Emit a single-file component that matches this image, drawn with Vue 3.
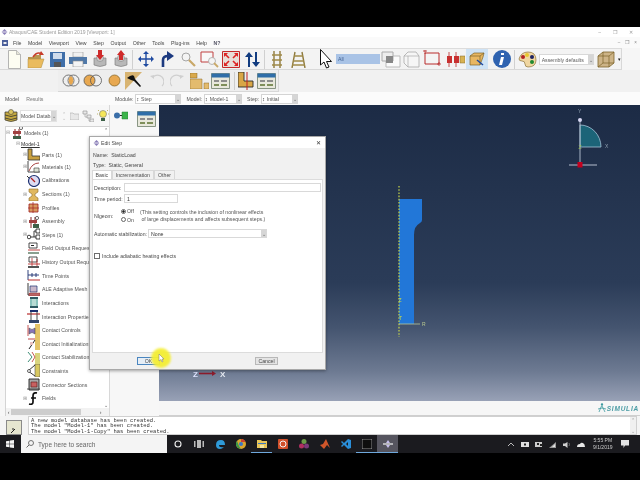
<template>
  <div class="screen">
    <div class="title-bar">
      <Ico class="app-ico" :s="icons.abq" :w="7" :ht="7" />
      <span>Abaqus/CAE Student Edition 2019 [Viewport: 1]</span>
      <div class="win-btns"><i>&#8211;</i><i>&#10064;</i><i>&#10005;</i></div>
    </div>
    <div class="menu-bar">
      <Ico class="sys" :s="icons.sysbox" :w="6" :ht="6" />
      <span v-for="m in menus" :key="m">{{ m }}</span>
      <span class="whats">N?</span>
      <div class="mdi-btns"><i>&#8211;</i><i>&#10064;</i><i>&#215;</i></div>
    </div>
    <div class="tool-row">
      <div class="tool-bar first">
        <template v-for="(t, n) in toolsOne" :key="n">
          <Ico :s="t.s" :w="t.w" :ht="t.h" :style="{ marginLeft: t.x + 'px' }" />
        </template>
        <div class="all-box">All</div>
        <template v-for="(t, n) in toolsTwo" :key="n">
          <span class="hl" v-if="t.hl" :style="{ marginLeft: t.x + 'px' }"><Ico :s="t.s" :w="t.w" :ht="t.h" /></span>
          <Ico v-else :s="t.s" :w="t.w" :ht="t.h" :style="{ marginLeft: t.x + 'px' }" />
        </template>
        <div class="defaults-box"><span>Assembly defaults</span><b>&#8964;</b></div>
        <Ico :s="icons.wire" :w="18" :ht="17" />
        <span class="more">&#9662;</span>
      </div>
    </div>
    <div class="tool-row second">
      <div class="tool-bar small">
        <template v-for="(t, n) in toolsRow2" :key="n">
          <span class="active-tool" v-if="t.hl" :style="{ marginLeft: t.x + 'px' }"><Ico :s="t.s" :w="t.w" :ht="t.h" /></span>
          <Ico v-else :s="t.s" :w="t.w" :ht="t.h" :style="{ marginLeft: t.x + 'px' }" />
        </template>
      </div>
    </div>
    <div class="context-row">
      <div class="tabs-left"><span>Model</span><span class="off">Results</span></div>
      <div class="ctx"><label>Module:</label><div class="combo mod"><em>&#8597;</em>Step<b>&#8964;</b></div></div>
      <div class="ctx"><label>Model:</label><div class="combo mdl"><em>&#8597;</em>Model-1<b>&#8964;</b></div></div>
      <div class="ctx"><label>Step:</label><div class="combo stp"><em>&#8597;</em>Initial<b>&#8964;</b></div></div>
    </div>

    <div class="main">
      <aside class="left">
        <div class="tree-head">
          <Ico :s="icons.dbs" :w="14" :ht="13" />
          <div class="db-combo"><span>Model Database</span><b>&#8964;</b></div>
          <span class="updown">&#8963;<br />&#8964;</span>
          <Ico :s="icons.folderGrey" :w="9" :ht="8" />
          <Ico :s="icons.treeGrey" :w="12" :ht="12" />
          <Ico :s="icons.bulb" :w="12" :ht="14" />
        </div>
        <div class="tree">
          <div class="tree-rows">
            <div v-for="row in tree" :key="row.label" class="tree-row" :class="'lvl' + row.lvl">
              <span class="exp"><template v-if="row.exp">{{ row.exp }}</template></span>
              <Ico v-if="row.s" :s="row.s" :w="13" :ht="13" />
              <span class="lbl" :class="{ cur: row.cur }">{{ row.label }}</span>
            </div>
          </div>
          <div class="vscroll"><span>&#8963;</span><span>&#8964;</span></div>
          <div class="hscroll"><span>&lsaquo;</span><div class="thumb"></div><span>&rsaquo;</span></div>
        </div>
      </aside>
      <div class="toolbox">
        <Ico :s="icons.nodes" :w="14" :ht="9" />
        <Ico :s="icons.dlg" :w="19" :ht="16" />
      </div>
      <div class="right">
        <svg class="viewport" viewBox="159 105 481 296" width="481" height="296">
          <defs>
            <linearGradient id="bg" x1="0" y1="0" x2="0" y2="1">
              <stop offset="0" stop-color="#1c2b45" />
              <stop offset=".6" stop-color="#2b3c58" />
              <stop offset=".75" stop-color="#44546f" />
              <stop offset=".9" stop-color="#6d7a92" />
              <stop offset="1" stop-color="#98a1b6" />
            </linearGradient>
          </defs>
          <rect x="159" y="105" width="481" height="296" fill="url(#bg)" />
          <path d="M399 199h23v21q0 2-2 3-6 3-6 12v89h-15z" fill="#2277d8" />
          <path d="M399 186V337" stroke="#c8d84a" stroke-dasharray="1.6 1.6" stroke-width="1.2" />
          <path d="M399 324h21" stroke="#b6c79a" stroke-width=".8" />
          <text x="422" y="325.5" class="vp-text" fill="#b9c88f">R</text>
          <text x="398.500" y="302" class="vp-text" fill="#c8d84a">Z</text>
          <text x="399" y="319.500" class="vp-text" fill="#c8d84a">T</text>
          <path d="M580 125a21 22 0 0 1 21 22h-21z" fill="#1c6478" stroke="#a6c4d8" stroke-width=".8" />
          <path d="M580 120V165" stroke="#b8c4d4" stroke-width=".9" />
          <path d="M569 165h28" stroke="#8c97a9" stroke-width="1.4" />
          <circle cx="580" cy="120" r="2" fill="#d8d8f4" />
          <rect x="577.5" y="162" width="5" height="5.5" fill="#c4001e" />
          <text x="578" y="113" class="vp-text" fill="#8fa0b0">Y</text>
          <text x="605" y="148" class="vp-text" fill="#8fa0b0">X</text>
          <text x="578.5" y="149" class="vp-text" fill="#9cc05a">Z</text>
          <path d="M199 373.500h15" stroke="#8e1c2c" stroke-width="1.6" />
          <path d="M212 371l4 2.500-4 2.500z" fill="#8e1c2c" />
          <text x="193" y="376.500" class="triad" fill="#dfe4ff">Z</text>
          <text x="220" y="376.500" class="triad" fill="#e8ecf4">X</text>
        </svg>
        <div class="status-band">
          <Ico :s="icons.simulia" :w="9" :ht="10" />
          <span class="simulia">SIMULIA</span>
        </div>
      </div>
    </div>

    <div class="message-row">
      <div class="msg-btn"><Ico :s="icons.msgArrow" :w="8" :ht="8" /></div>
      <div class="msg-box">
        <pre>A new model database has been created.
The model "Model-1" has been created.
The model "Model-1-Copy" has been created.</pre>
        <div class="msg-scroll"><span>&#8963;</span><span>&#8964;</span></div>
      </div>
    </div>

    <div class="taskbar">
      <Ico class="start" :s="icons.win" :w="8" :ht="8" />
      <div class="search">
        <Ico :s="icons.searchGlass" :w="8" :ht="8" />
        <span>Type here to search</span>
      </div>
      <div class="task-icons">
        <span v-for="(t, n) in taskIcons" :key="n" class="task-ico" :class="{ open: t.open, on: t.on }">
          <Ico :s="t.s" :w="10" :ht="10" />
        </span>
      </div>
      <div class="tray">
        <Ico v-for="(t, n) in trayIcons" :key="n" :s="t" :w="8" :ht="7" />
        <div class="clock"><span>5:55 PM</span><span>9/1/2019</span></div>
        <Ico class="notify" :s="icons.notify" :w="8" :ht="8" />
      </div>
    </div>

    <section class="dialog">
      <header class="dlg-title">
        <Ico :s="icons.abq" :w="6" :ht="6" />
        <span>Edit Step</span>
        <i>&#10005;</i>
      </header>
      <div class="dlg-body">
        <p class="info">Name:&nbsp; StaticLoad</p>
        <p class="info">Type:&nbsp; Static, General</p>
        <div class="dlg-tabs">
          <span class="tab on">Basic</span>
          <span class="tab">Incrementation</span>
          <span class="tab">Other</span>
        </div>
        <div class="panel">
          <div class="field-row"><label class="lab-a">Description:</label><div class="input wide"></div></div>
          <div class="field-row"><label class="lab-a">Time period:</label><div class="input short">1</div></div>
          <div class="nl-row">
            <label class="nl-label">Nlgeom:</label>
            <div class="radios">
              <span class="radio"><i class="dot on"></i>Off</span>
              <span class="radio"><i class="dot"></i>On</span>
            </div>
            <div class="nl-note">
              (This setting controls the inclusion of nonlinear effects<br />
              &nbsp;of large displacements and affects subsequent steps.)
            </div>
          </div>
          <div class="field-row stab">
            <label>Automatic stabilization:</label>
            <div class="input select">None<b>&#8964;</b></div>
          </div>
          <div class="check-row"><i class="box"></i>Include adiabatic heating effects</div>
        </div>
        <div class="dlg-foot">
          <button class="btn ok">OK</button>
          <button class="btn cancel">Cancel</button>
        </div>
      </div>
    </section>
    <div class="cursor-glow"></div>
    <svg class="pointer" width="7" height="9" viewBox="0 0 7 9"><path d="M1 0v7l2-1.500 1 2.500 1-.5-1-2.500h2z" fill="#fff" stroke="#777" stroke-width=".5" /></svg>
  </div>
</template>

<script setup>
import { h } from 'vue'

const Ico = ({ s, w, ht }) =>
  h('svg', { width: w, height: ht, viewBox: `0 0 ${w} ${ht}` },
    s.map(([d, fill = 'none', stroke = 'none', sw = 1]) =>
      h('path', { d, fill, stroke, 'stroke-width': sw })))

const c = (x, y, r) => `M${x - r} ${y}a${r} ${r} 0 1 0 ${2 * r} 0a${r} ${r} 0 1 0 ${-2 * r} 0z`

const menus = ['File', 'Model', 'Viewport', 'View', 'Step', 'Output', 'Other', 'Tools', 'Plug-ins', 'Help']

const cyl = (top, body) => [
  ['M1 8v7q6 3 12 0V8z', body, '#777', 0.6],
  [c(7, 8, 3.5), top, '#777', 0.5]
]
const dlg = [
  ['M.5 .5h18v15H.5z', '#e8e8dc', '#6f7f6a', 0.8],
  ['M.5 .5h18v4H.5z', '#2f6ea8'],
  ['M3 7h5v2H3zM10 7h6v2h-6z', '#8d8d8d'],
  ['M3 11h5v2H3zM10 11h6v2h-6z', '#7f8f5a']
]
const rail = [
  ['M3 0V17M9 0V17', 'none', '#8f7a3c', 1.4],
  ['M1 4h10M1 9h10M1 14h10', 'none', '#a08a48', 1.4]
]
const railB = [
  ['M4 1L1 17M11 1L14 17', 'none', '#8f7a3c', 1.4],
  ['M3 5h9M2 10h11M1 14h13', 'none', '#a08a48', 1.4]
]
const mag = [
  [c(5, 5, 4), '#f4f4f4', '#a6a6a6', 1],
  ['M8 8l6 6', 'none', '#c9a868', 2.2]
]

const icons = {
  abq: [['M3.500 0l3 3-3 3-3-3z', '#8a7fb8'], ['M0 3h7', 'none', '#fff', 0.8]],
  sysbox: [['M0 0h6v6H0z', '#4b5f9a'], ['M1.500 2h3v2h-3z', '#eee']],
  wire: [
    ['M1 5l5-4h11v11l-5 4H1z', '#cdb487', '#7b6328', 0.8],
    ['M1 5h11v11M12 5l5-4M6 1v11H17M6 12l-5 4', 'none', '#7b6328', 0.7]
  ],
  dbs: [
    ['M1 3v8q6 3 12 0V3z', '#c4a840', '#333', 0.7],
    [c(7, 3, 2.5), '#dcc662', '#333', 0.5],
    ['M1 6q6 3 12 0M1 9q6 3 12 0', 'none', '#333', 0.8]
  ],
  folderGrey: [['M0 1h3l1 1h5v6H0z', '#e8e8e8', '#b4b4b4', 0.7]],
  treeGrey: [['M1 1h4v3H1zM5 5h4v3H5zM8 9h4v3H8z', '#e8e8e8', '#999', 0.7], ['M3 4v3h2M7 8v3h1', 'none', '#999', 0.6]],
  bulb: [
    [c(6, 5, 3.5), '#f4e65a', '#777', 0.6],
    ['M4 9h4v3H4z', '#3d6148'],
    ['M1 1l1 1M11 1l-1 1M0 5h1M12 5h-1', 'none', '#a89a32', 0.7]
  ],
  nodes: [
    [c(3, 4.5, 3), '#3a6ea8'],
    ['M6 4.500h3', 'none', '#222', 1],
    ['M8 1h6v7H8z', '#3cb44a', '#2a7d36', 0.5]
  ],
  dlg,
  simulia: [
    [c(5, 1.5, 1.2), '#3c9aa0'],
    ['M4.500 3L2 9M5 3l3 6M1 6q4-2 8 0', 'none', '#3c9aa0', 0.8]
  ],
  msgArrow: [['M1 7l4-4M2 3l2 0', 'none', '#222', 1]],
  win: [['M0 1.200l3.500-.5v3H0zM4 .6L8 0v3.700H4zM0 4.300h3.500v3L0 6.800zM4 4.300h4V8l-4-.6z', '#f4f4f4']],
  searchGlass: [[c(5, 3, 2.500), 'none', '#555', 0.8], ['M3 5L.5 7.500', 'none', '#555', 0.9]],
  notify: [['M0 0h8v5.500H4L2.500 8V5.500H0z', '#e4e4e4']]
}

const toolsOne = [
  { x: 8, w: 13, h: 19, s: [['M.5 .5h8l4 4v14H.5z', '#fdfdf2', '#a2a2a2', 0.8], ['M8.500 .5v4h4', '#e6e6d8', '#a2a2a2', 0.6]] },
  { x: 6, w: 18, h: 17, s: [['M1 6h5l2-2h6v4H1z', '#b8964e'], ['M1 8h16l-3 9H1z', '#eabb5e', '#a98a44', 0.5], ['M6 6q4-6 9-3', 'none', '#c83c2a', 1.6], ['M14 0l3 4-5 0z', '#c83c2a']] },
  { x: 5, w: 15, h: 15, s: [['M0 0h15v15H0z', '#3f6ea8'], ['M3 1h9v6H3z', '#cfdcec'], ['M4 10h7v5H4z', '#555']] },
  { x: 4, w: 18, h: 15, s: [['M4 0h10v5H4z', '#f0f0f0', '#999', 0.6], ['M0 5h18v7H0z', '#4f78a8'], ['M4 9h10v6H4z', '#f4f4f4', '#8c8c8c', 0.6]] },
  { x: 6, w: 14, h: 19, s: [...cyl('#cfcfcf', '#b8b8b8'), ['M5 0h4v5h2L7 10 3 5h2z', '#cf2a2a']] },
  { x: 7, w: 14, h: 19, s: [...cyl('#cfcfcf', '#b8b8b8'), ['M5 10h4V5h2L7 0 3 5h2z', '#cf2a2a']] },
  { x: 4, w: 1, h: 19, s: [['M.5 0v19', 'none', '#d0d0d0', 1]] },
  { x: 5, w: 16, h: 16, s: [['M8 1v14M1 8h14', 'none', '#1f4aa0', 1.4], ['M8 0l3 3H5zM8 16l3-3H5zM0 8l3-3v6zM16 8l-3-3v6z', '#1f4aa0']] },
  { x: 6, w: 14, h: 16, s: [['M3 16V9q0-4 5-4', 'none', '#1c3a80', 2.6], ['M7 0l7 5-7 5z', '#1c3a80']] },
  { x: 7, w: 15, h: 15, s: mag },
  { x: 4, w: 19, h: 17, s: [['M1 1h12v10H1z', '#f8f8f8', '#c04040', 1], [c(12, 10, 3.5), '#f4f4f4', '#a6a6a6', 0.8], ['M14 12l4 4', 'none', '#c9a868', 1.8]] },
  { x: 3, w: 18, h: 17, s: [['M.5 .5h17v16H.5z', '#e8ded8', '#c42a2a', 1], ['M3 3l4 4M15 3l-4 4M3 14l4-4M15 14l-4-4', 'none', '#d22', 1.6], ['M2 2h4L2 6zM16 2h-4l4 4zM2 15h4l-4-4zM16 15h-4l4-4z', '#d22']] },
  { x: 5, w: 15, h: 15, s: [['M4 3v12M11 0v12', 'none', '#123c80', 2], ['M0 5l4-5 4 5zM7 10l4 5 4-5z', '#123c80']] },
  { x: 4, w: 1, h: 19, s: [['M.5 0v19', 'none', '#d0d0d0', 1]] },
  { x: 6, w: 12, h: 17, s: rail },
  { x: 8, w: 15, h: 17, s: railB },
  { x: 14, w: 13, h: 20, s: [['M.5 .5V16l3.500-3 2.500 6 2.500-1-2.500-5.500h5z', '#fff', '#111', 1]] }
]

const toolsTwo = [
  { x: 1, w: 20, h: 17, s: [['M5 5h14v11H5z', '#fbfbfb', '#bbb', 1], ['M1 1h11v9H1z', '#ededed', '#aaa', 1], ['M5 5h7v7H5z', '#888']] },
  { x: 2, w: 17, h: 17, s: [['M1 5l4-4h8l3 4v11H5l-4-4z', '#f6f6f6', '#aaa', 0.8], ['M5 5h11M5 5v11M5 5l-4 0', 'none', '#aaa', 0.7]] },
  { x: 3, w: 19, h: 18, s: [['M2 3h14v11H2z', '#f4f4f4', '#b92c2c', 1], ['M0 1h4M2 0v4M14 14h4M16 12v4', 'none', '#b92c2c', 0.8]] },
  { x: 4, w: 19, h: 18, s: [['M3 2v15M10 2v15', 'none', '#b92c2c', 0.8], ['M1 6h5v7H1zM8 6h5v7H8z', '#c83030'], ['M14 6h5v7h-5z', '#d8b252', '#80692c', 0.5]] },
  { hl: true, x: 1, w: 16, h: 14, s: [['M1 4l4-3h10l-1 4-3 8H1z', '#e8b762', '#7b6328', 0.7], ['M1 4h10v9M11 4l4-3', 'none', '#7b6328', 0.7], ['M8 8l6 5', 'none', '#1f4aa0', 1.5]] },
  { x: 5, w: 18, h: 18, s: [[c(9, 9, 9), '#2f63b0'], ['M8 3h3v2H8zM8 7h3l-2 8H6z', '#fff']] },
  { x: 3, w: 1, h: 19, s: [['M.5 0v19', 'none', '#d0d0d0', 1]] },
  { x: 3, w: 19, h: 17, s: [['M1 8q2-7 9-7 8 0 8 8 0 7-8 7-3 0-3-3 0-3-3-3-3 0-3-2z', '#f0d6a0', '#8c7238', 0.7], [c(5, 6, 2), '#b02020'], [c(9, 4, 2), '#e8c830'], [c(14, 6, 2), '#1c2060'], [c(14, 11, 2), '#1f8a30']] }
]

const toolsRow2 = [
  { x: 4, w: 18, h: 13, s: [[c(6.5, 6.5, 5.5), 'none', '#555', 0.8], [c(11.5, 6.5, 5.5), 'none', '#555', 0.8], ['M9 2a5.500 5.500 0 0 1 0 9 5.500 5.500 0 0 1 0-9z', '#e8a850']] },
  { x: 3, w: 20, h: 13, s: [[c(6.5, 6.5, 5.5), '#e8a850', '#555', 0.8], [c(13, 6.5, 5.500), 'none', '#555', 0.8]] },
  { x: 5, w: 13, h: 13, s: [[c(6.5, 6.5, 5.5), '#e8a850', '#8a6a2a', 0.8]] },
  { hl: true, x: 4, w: 17, h: 18, s: [['M0 18V0h17z', '#d8b472'], ['M2 6q5-4 7-2l1 3 6 7-1 1-6-6-3-1z', '#111']] },
  { x: 7, w: 15, h: 13, s: [['M13 12a6 6 0 1 0-9-9', 'none', '#cfcfcf', 1.1], ['M1 2l4-1v4z', '#cfcfcf']] },
  { x: 6, w: 15, h: 13, s: [['M2 12a6 6 0 1 1 9-9', 'none', '#cfcfcf', 1.1], ['M14 2l-4-1v4z', '#cfcfcf']] },
  { x: 5, w: 19, h: 16, s: [['M0 0h7v5H0z', '#d9a94c', '#8a6a2a', 0.5], ['M0 6h12v10H0z', '#e3bb6e', '#8a6a2a', 0.5], ['M14 10h5v6h-5z', '#e3bb6e', '#8a6a2a', 0.5]] },
  { x: 2, w: 19, h: 16, s: dlg },
  { x: 4, w: 1, h: 18, s: [['M.5 0v18', 'none', '#ccc', 1]] },
  { x: 3, w: 16, h: 18, s: [['M0 0h6v9h9v6H0z', '#d8a646', '#2a2a2a', 0.9], ['M9 0v18', 'none', '#c02020', 1]] },
  { x: 3, w: 19, h: 16, s: dlg }
]

const expP = '\u229E'
const treeIcon = {
  models: [['M5 3v10M9 3v10', 'none', '#8a2020', 1], ['M3 5h8v3H3z', '#a04040'], ['M3 10h8v3H3z', '#3f5f48'], [c(11, 2, 1.6), '#fff', '#333', 0.7]],
  parts: [['M1 1h4v7h8v4H1z', '#c8a040', '#333', 0.8]],
  materials: [['M1 1v11h12', 'none', '#333', 0.9], ['M2 11q3-8 10-8', 'none', '#a03030', 0.9], ['M7 8h5v4H7z', '#dfe4d8', '#333', 0.6]],
  calib: [[c(7, 7, 5.5), '#dcdcf4', '#1c3070', 1.2], ['M4 4l4 4', 'none', '#b02020', 1.2], ['M0 2l2 2', 'none', '#333', 1]],
  sections: [['M2 1h9v3l-3 2v2l3 2v3H2v-3l3-2V6L2 4z', '#e0b860', '#8a6a2a', 0.6]],
  profiles: [['M2 3h9v8H2z', '#d89a60', '#a02020', 0.8], ['M1 7h11M6 1v11', 'none', '#a02020', 0.7]],
  assembly: [['M4 2v11M8 2v11', 'none', '#8a2020', 1], ['M2 5h8v3H2z', '#a04040'], ['M6 9h6v4H6z', '#3f5f48'], [c(10, 3, 1.6), '#fff', '#333', 0.7]],
  steps: [[c(2, 9, 1.8), '#fff', '#111', 0.8], ['M4 9h3V3h2M7 9h2', 'none', '#111', 0.8], ['M9 1h4v4H9zM9 7h4v4H9z', '#fff', '#111', 0.8]],
  field: [['M2 1h8v5H2z', '#fff', '#222', 0.8], ['M4 3h3v1H4z', '#222'], ['M1 8h12', 'none', '#b92c2c', 0.9], ['M1 10h11v2H1z', '#8aa090']],
  history: [['M2 1h8v5H2z', '#fff', '#222', 0.8], ['M1 8h12', 'none', '#b92c2c', 0.9], ['M5 2v9M10 3v8', 'none', '#b92c2c', 0.8], ['M1 10h11v2H1z', '#555']],
  time: [['M1 1v10M1 6h11M5 4v4M9 4v4', 'none', '#1c3070', 0.9], ['M1 11h12', 'none', '#b92c2c', 1]],
  ale: [['M1 0v12h12', 'none', '#222', 0.9], ['M3 3h7v6H3z', '#c9b7c9', '#1c3070', 0.7], ['M2 10h11v3H2z', '#b66', '#822', 0.4]],
  interactions: [['M3 1h8v2H3zM3 10h8v2H3z', '#2e5a62'], ['M4 3v7M10 3v7', 'none', '#3c9c90', 1.2], ['M5 3h4v7H5z', '#b8dcd4']],
  props: [['M3 0h8v2H3z', '#1c3070'], ['M0 4h14', 'none', '#b92c2c', 1.2], ['M4 2v9M10 2v9', 'none', '#444', 1], ['M2 10h10v3H2z', '#33466a']],
  ctrl: [['M8 0h5v13H8z', '#e4c468'], ['M2 4q3 3 6 0v6q-3-3-6 0z', '#8874b8', '#333', 0.5], ['M1 1v11', 'none', '#b92c2c', 0.8]],
  init: [['M8 0h5v13H8z', '#e4c468'], ['M2 12l6-9', 'none', '#222', 1], ['M1 2h7', 'none', '#b92c2c', 0.9], ['M3 5h3v3H3z', '#e8c0c0']],
  stab: [['M8 2h5v11H8z', '#d8d480'], ['M1 1l4 5-4 5', 'none', '#3e8e78', 1], ['M5 1l3 5-3 5', 'none', '#b92c2c', 0.8]],
  constraints: [['M8 0h5v13H8z', '#d8c860', '#555', 0.6], ['M1 7l7-6M1 7l7 5', 'none', '#222', 0.9], [c(2, 7, 1.5), '#fff', '#222', 0.7]],
  connector: [['M2 1h10v11H2z', '#a8a8a8', '#222', 0.9], ['M4 4h6v5H4z', '#c86060', '#622', 0.7], ['M0 11h13', 'none', '#444', 0.9]],
  fields: [['M10 1q-4-1-4 3v6q0 3-4 2M4 6h5', 'none', '#111', 1.7]]
}

const tree = [
  { lvl: 0, exp: '\u229F', s: treeIcon.models, label: 'Models (1)' },
  { lvl: 1, exp: '\u229F', label: 'Model-1', cur: true },
  { lvl: 2, exp: expP, s: treeIcon.parts, label: 'Parts (1)' },
  { lvl: 2, exp: expP, s: treeIcon.materials, label: 'Materials (1)' },
  { lvl: 2, s: treeIcon.calib, label: 'Calibrations' },
  { lvl: 2, exp: expP, s: treeIcon.sections, label: 'Sections (1)' },
  { lvl: 2, s: treeIcon.profiles, label: 'Profiles' },
  { lvl: 2, exp: expP, s: treeIcon.assembly, label: 'Assembly' },
  { lvl: 2, exp: expP, s: treeIcon.steps, label: 'Steps (1)' },
  { lvl: 2, s: treeIcon.field, label: 'Field Output Requests' },
  { lvl: 2, s: treeIcon.history, label: 'History Output Requests' },
  { lvl: 2, s: treeIcon.time, label: 'Time Points' },
  { lvl: 2, s: treeIcon.ale, label: 'ALE Adaptive Mesh Constraints' },
  { lvl: 2, s: treeIcon.interactions, label: 'Interactions' },
  { lvl: 2, s: treeIcon.props, label: 'Interaction Properties' },
  { lvl: 2, s: treeIcon.ctrl, label: 'Contact Controls' },
  { lvl: 2, s: treeIcon.init, label: 'Contact Initializations' },
  { lvl: 2, s: treeIcon.stab, label: 'Contact Stabilizations' },
  { lvl: 2, s: treeIcon.constraints, label: 'Constraints' },
  { lvl: 2, s: treeIcon.connector, label: 'Connector Sections' },
  { lvl: 2, exp: expP, s: treeIcon.fields, label: 'Fields' }
]

const taskIcons = [
  { s: [[c(5, 5, 3), 'none', '#eee', 1.1]] },
  { s: [['M0 2h1.500v6H0zM8.500 2H10v6H8.500zM3 1h4v8H3z', '#bbb']] },
  { s: [['M1 6q0-5 5-5 4 0 4 5H4q0 3 5 2-2 2-4 2-4 0-4-4z', '#2f9ad8']] },
  { s: [[c(5, 5, 5), '#d9a62e'], ['M5 0a5 5 0 0 1 4.500 3H5z', '#d04030'], ['M1 2l2 5 2 3a5 5 0 0 1-4-8z', '#3a9a48'], [c(5, 5, 2), '#3a78c8']] },
  { open: true, s: [['M0 1h4l1 1h5v7H0z', '#e8c558'], ['M1 4h8v1H1z', '#3b78c0'], ['M3 6h4v3H3z', '#f4e6a0']] },
  { s: [['M1 0h8a1 1 0 0 1 1 1v8a1 1 0 0 1-1 1H1a1 1 0 0 1-1-1V1a1 1 0 0 1 1-1z', '#d2502a'], [c(5, 5, 3), 'none', '#f4f4f4', 1]] },
  { s: [[c(5, 2.500, 2.500), '#6c9a48'], [c(2.500, 7, 2.500), '#b03060'], [c(7.500, 7, 2.500), '#7a3a7a']] },
  { s: [['M0 6l3-1 3-5 4 9-3-3-3 4z', '#d0562a']] },
  { s: [['M7 0l3 1v8l-3 1-4-4-2 2-1-1 2-2-2-2 1-1 2 2z', '#2a8ed8'], ['M7 3L5 5l2 2z', '#1a1a1d']] },
  { open: true, s: [['M0 0h10v10H0z', '#0e0e0e', '#b0b0b0', 0.8]] },
  { open: true, on: true, s: [['M5 1l2 3H3zM5 9L3 6h4z', '#c8c0ee'], ['M0 5h10', 'none', '#f4f4f4', 1.2]] }
]

const trayIcons = [
  [['M1 5l3-3 3 3', 'none', '#ccc', 0.9]],
  [['M0 1h8v5H0z', '#e0e0e0'], ['M3 2.500h2v2H3z', '#222']],
  [['M0 1h7v5H0z', '#ccc'], ['M2 2h2v2H2zM5 3h3v2H5z', '#222']],
  [['M0 7l7-6v6z', '#999'], ['M3 6l3-3v3z', '#e4e4e4']],
  [['M0 2.500h2L4.500 1v6L2 5H0z', '#d0d0d0'], ['M6 2q1 1.500 0 3', 'none', '#888', 0.7]],
  [['M0 6q0-3 3-3 1-2 3-1 2 1 2 4z', '#e8e8e8']]
]
</script>

<style>
html, body { background: #000; }
</style>

<style scoped>
.screen {
  position: relative;
  width: 640px;
  height: 480px;
  overflow: hidden;
  background: #000;
  display: flex;
  flex-direction: column;
  padding: 27px 0;
  box-sizing: border-box;
  font-family: "Liberation Sans", Arial, sans-serif;
  font-size: 5.200px;
  color: #4a4a4a;
  filter: blur(.35px);
}
svg { display: block; flex: none; }
i { font-style: normal; }

.title-bar {
  height: 10px;
  display: flex;
  align-items: center;
  padding-left: 1px;
  gap: 1px;
  background: #fff;
  color: #9a9a9a;
  font-size: 5px;
}
.win-btns { margin-left: auto; display: flex; gap: 12px; padding-right: 7px; color: #999; font-size: 5px; }
.menu-bar {
  height: 11px;
  display: flex;
  align-items: center;
  padding-left: 2px;
  gap: 6.600px;
  background: #fafafa;
  color: #454545;
}
.sys { margin-right: -1.500px; }
.whats { color: #556; font-weight: bold; }
.mdi-btns { margin-left: auto; display: flex; gap: 5px; padding-right: 3px; color: #888; font-size: 4.500px; }

.tool-row { height: 22px; background: #f6f6f6; display: flex; }
.tool-row.second { height: 22px; background: #f1f1f1; }
.tool-bar {
  display: flex;
  align-items: center;
  width: 622px;
  background: #f3f3f3;
  border-top: 1px solid #dcdcdc;
  border-bottom: 1px solid #d8d8d8;
  border-right: 1px solid #d8d8d8;
  box-sizing: border-box;
}
.tool-bar.small {
  width: 221px;
  margin-left: 58px;
  border-top: 0;
  background: #eeeeee;
}
.all-box {
  width: 45px;
  height: 10px;
  line-height: 10px;
  margin-left: 3px;
  padding-left: 2px;
  box-sizing: border-box;
  background: #a9c3e6;
  color: #3d5f90;
}
.hl {
  margin-right: 0;
  padding: 3px 3px;
  background: #cfe3f5;
  display: block;
}
.active-tool { display: block; }
.defaults-box {
  width: 57px;
  height: 11px;
  line-height: 11px;
  margin: 0 3px 0 2px;
  padding-left: 2px;
  box-sizing: border-box;
  background: #fff;
  border: 1px solid #d8d8d8;
  color: #5a5a5a;
  display: flex;
  justify-content: space-between;
}
.defaults-box b, .combo b, .db-combo b, .select b {
  width: 5px;
  flex: none;
  background: #d6d6d6;
  color: #666;
  font-weight: normal;
  text-align: center;
}
.more { margin-left: 3px; color: #222; }

.context-row {
  height: 13px;
  display: flex;
  align-items: center;
  background: #fbfbfb;
  color: #555;
}
.tabs-left { width: 112px; display: flex; gap: 7px; padding-left: 5px; box-sizing: border-box; }
.tabs-left .off { color: #777; }
.ctx { display: flex; align-items: center; gap: 2px; margin-left: 5px; }
.tabs-left + .ctx { margin-left: 3px; }
.combo {
  height: 10px;
  line-height: 9px;
  background: #fff;
  border: 1px solid #d4d4d4;
  box-sizing: border-box;
  display: flex;
  gap: 2px;
}
.combo em { font-style: normal; color: #222; }
.combo b { margin-left: auto; }
.combo.mod { width: 46px; }
.combo.mdl { width: 38px; }
.combo.stp { width: 37px; }

.main { flex: 1; min-height: 0; display: flex; }
.left { width: 110px; background: #f7f7f7; display: flex; flex-direction: column; border-right: 1px solid #d8d8d8; box-sizing: border-box; }
.tree-head {
  height: 21px;
  flex: none;
  display: flex;
  align-items: center;
  padding-left: 4px;
  gap: 3px;
  box-sizing: border-box;
}
.db-combo {
  width: 37px;
  height: 12px;
  line-height: 11px;
  margin-left: -1px;
  background: #fff;
  color: #555;
  display: flex;
  white-space: nowrap;
  border: 1px solid #e2e2e2;
  box-sizing: border-box;
}
.db-combo span { flex: 1; min-width: 0; overflow: hidden; }
.updown { color: #bbb; line-height: 4px; width: 7px; text-align: center; }
.tree {
  position: relative;
  flex: 1;
  margin-left: 5px;
  background: #fff;
  border: 1px solid #d4d4d4;
  border-bottom: 0;
  border-right: 0;
  box-sizing: border-box;
  overflow: hidden;
}
.tree-rows { display: flex; flex-direction: column; }
.tree-row { flex: none; height: 13.620px; display: flex; align-items: center; white-space: nowrap; color: #555; }
.tree-row:nth-child(-n+3) { height: 11px; }
.exp { width: 5px; flex: none; color: #999; font-size: 5px; line-height: 5px; }
.lvl0 .lbl { margin-left: 1px; }
.lvl0 svg { margin-left: -1px; }
.lvl1 { padding-left: 10px; }
.lbl.cur { text-decoration: underline; color: #333; }
.lvl2 { padding-left: 17px; }
.lvl2 svg { margin-left: -1px; }
.lvl2 .lbl { margin-left: 2px; }
.vscroll {
  position: absolute;
  top: 0;
  right: 0;
  bottom: 8px;
  width: 7px;
  background: #fff;
  color: #555;
  display: flex;
  flex-direction: column;
  justify-content: space-between;
  align-items: center;
}
.hscroll {
  position: absolute;
  left: 0;
  right: 0;
  bottom: 0;
  height: 8px;
  background: #f2f2f2;
  display: flex;
  align-items: center;
  color: #555;
}
.hscroll span { width: 5px; text-align: center; }
.thumb { width: 70px; height: 6px; background: #cdcdcd; margin-right: 17px; }

.toolbox {
  width: 49px;
  box-sizing: border-box;
  padding: 6px 3px 0 4px;
  background: #f7f7f7;
  display: flex;
  align-items: flex-start;
  gap: 9px;
}
.right { flex: 1; display: flex; flex-direction: column; }
.viewport { width: 481px; height: 296px; }
.vp-text { font-family: "Liberation Sans", Arial, sans-serif; font-size: 5px; }
.triad { font-family: "Liberation Sans", Arial, sans-serif; font-size: 8px; font-weight: bold; }
.status-band {
  flex: 1;
  display: flex;
  align-items: center;
  justify-content: flex-end;
  gap: 1px;
  padding-right: 1px;
  background: #f6f6f6;
  border-bottom: 1px solid #cfcfcf;
}
.simulia {
  font-style: italic;
  font-weight: bold;
  font-size: 6.500px;
  letter-spacing: .8px;
  color: #4a9ca4;
}

.message-row { height: 19px; flex: none; display: flex; background: #f4f4f4; }
.msg-btn {
  width: 16px;
  height: 15px;
  margin: 4px 6px 0 6px;
  background: #e6e6d0;
  border: 1px solid #8a8a8a;
  box-sizing: border-box;
  display: flex;
  align-items: flex-end;
  padding-left: 3px;
}
.msg-box {
  flex: 1;
  margin-right: 3px;
  position: relative;
  background: #fff;
  border: 1px solid #d0d0d0;
  box-sizing: border-box;
  overflow: hidden;
}
.msg-box pre {
  margin: 0;
  padding: .5px 0 0 2px;
  font-family: "Liberation Mono", monospace;
  font-size: 5.500px;
  line-height: 5.500px;
  color: #333;
}
.msg-scroll {
  position: absolute;
  top: 0;
  right: 0;
  bottom: 0;
  width: 6px;
  background: #f0f0f0;
  display: flex;
  flex-direction: column;
  justify-content: space-between;
  align-items: center;
  color: #999;
}

.taskbar {
  height: 18px;
  flex: none;
  display: flex;
  align-items: center;
  background: #1b1b1f;
  color: #ddd;
}
.start { margin-left: 6px; }
.search {
  width: 146px;
  height: 18px;
  margin-left: 7px;
  padding-left: 5px;
  box-sizing: border-box;
  background: #f4f4f4;
  color: #666;
  font-size: 6.500px;
  display: flex;
  align-items: center;
  gap: 4px;
}
.task-icons { display: flex; }
.task-ico {
  width: 21px;
  height: 18px;
  display: flex;
  align-items: center;
  justify-content: center;
  box-sizing: border-box;
}
.task-ico.open { border-bottom: 1px solid #6fa8dc; }
.task-ico.on { background: #56555f; }
.tray { margin-left: auto; display: flex; align-items: center; gap: 6px; padding-right: 11px; }
.clock {
  display: flex;
  flex-direction: column;
  align-items: center;
  margin-left: 2.500px;
  font-size: 5px;
  line-height: 7px;
  color: #ccc;
}
.notify { margin-left: 2.500px; }

.dialog {
  position: absolute;
  left: 89px;
  top: 136px;
  width: 237px;
  height: 234px;
  display: flex;
  flex-direction: column;
  background: #f1f1f1;
  border: 1px solid #a8a8a8;
  box-sizing: border-box;
  box-shadow: 0 1px 3px rgba(0, 0, 0, .35);
  color: #4a4a4a;
}
.dlg-title {
  height: 11px;
  flex: none;
  display: flex;
  align-items: center;
  gap: 2px;
  padding-left: 3px;
  background: #fff;
}
.dlg-title i { margin-left: auto; margin-right: 4px; font-size: 6px; color: #333; }
.dlg-body { flex: 1; min-height: 0; display: flex; flex-direction: column; padding: 3px 2px 0; }
.info { margin: 0; padding-left: 1px; height: 9.500px; line-height: 9.500px; color: #444; }
.dlg-tabs { display: flex; height: 9px; align-items: flex-end; }
.tab {
  height: 9px;
  line-height: 9px;
  padding: 0 3px;
  border: 1px solid #d8d8d8;
  border-bottom: 0;
  box-sizing: border-box;
}
.tab.on { background: #fff; padding: 0 2.500px; }
.panel {
  flex: 1;
  min-height: 0;
  display: flex;
  flex-direction: column;
  background: #fff;
  border: 1px solid #dcdcdc;
  padding: 2px 1px 0 1px;
  box-sizing: border-box;
}
.field-row { display: flex; align-items: center; height: 11px; }
.lab-a { width: 30px; flex: none; white-space: nowrap; }
.input {
  height: 9.500px;
  line-height: 9px;
  background: #fff;
  border: 1px solid #d9d9d9;
  box-sizing: border-box;
  padding-left: 2px;
  color: #333;
}
.wide { flex: 1; }
.short { width: 54px; }
.nl-row { display: flex; align-items: center; margin-top: 2px; height: 19px; }
.nl-label { width: 27px; flex: none; }
.radios { width: 19px; flex: none; display: flex; flex-direction: column; gap: 2.500px; }
.radio { display: flex; align-items: center; gap: 1px; }
.dot {
  width: 5px;
  height: 5px;
  border: 1px solid #666;
  border-radius: 50%;
  box-sizing: border-box;
  background: #fff;
}
.dot.on { background: radial-gradient(circle, #222 45%, #fff 55%); }
.nl-note { line-height: 7px; color: #555; white-space: nowrap; }
.stab { margin-top: 3px; gap: 1px; }
.select { width: 119px; display: flex; justify-content: space-between; padding-right: 0; }
.check-row { display: flex; align-items: center; gap: 2px; margin-top: 14px; }
.box { width: 6px; height: 6px; border: 1px solid #6c6c6c; box-sizing: border-box; background: #fff; }
.dlg-foot { height: 16px; flex: none; display: flex; align-items: center; justify-content: space-between; padding: 0 45px; }
.btn {
  width: 23px;
  height: 8px;
  padding: 0;
  font: inherit;
  line-height: 6px;
  color: #444;
  background: #e4e4e4;
  border: 1px solid #b8b8b8;
}
.btn.ok { border-color: #4a86c0; background: #e6eef6; }

.cursor-glow {
  position: absolute;
  left: 151px;
  top: 348px;
  width: 20px;
  height: 20px;
  border-radius: 50%;
  background: #f4ee34;
  opacity: .95;
  filter: blur(1px);
}
.pointer { position: absolute; left: 158px; top: 354px; }
</style>
